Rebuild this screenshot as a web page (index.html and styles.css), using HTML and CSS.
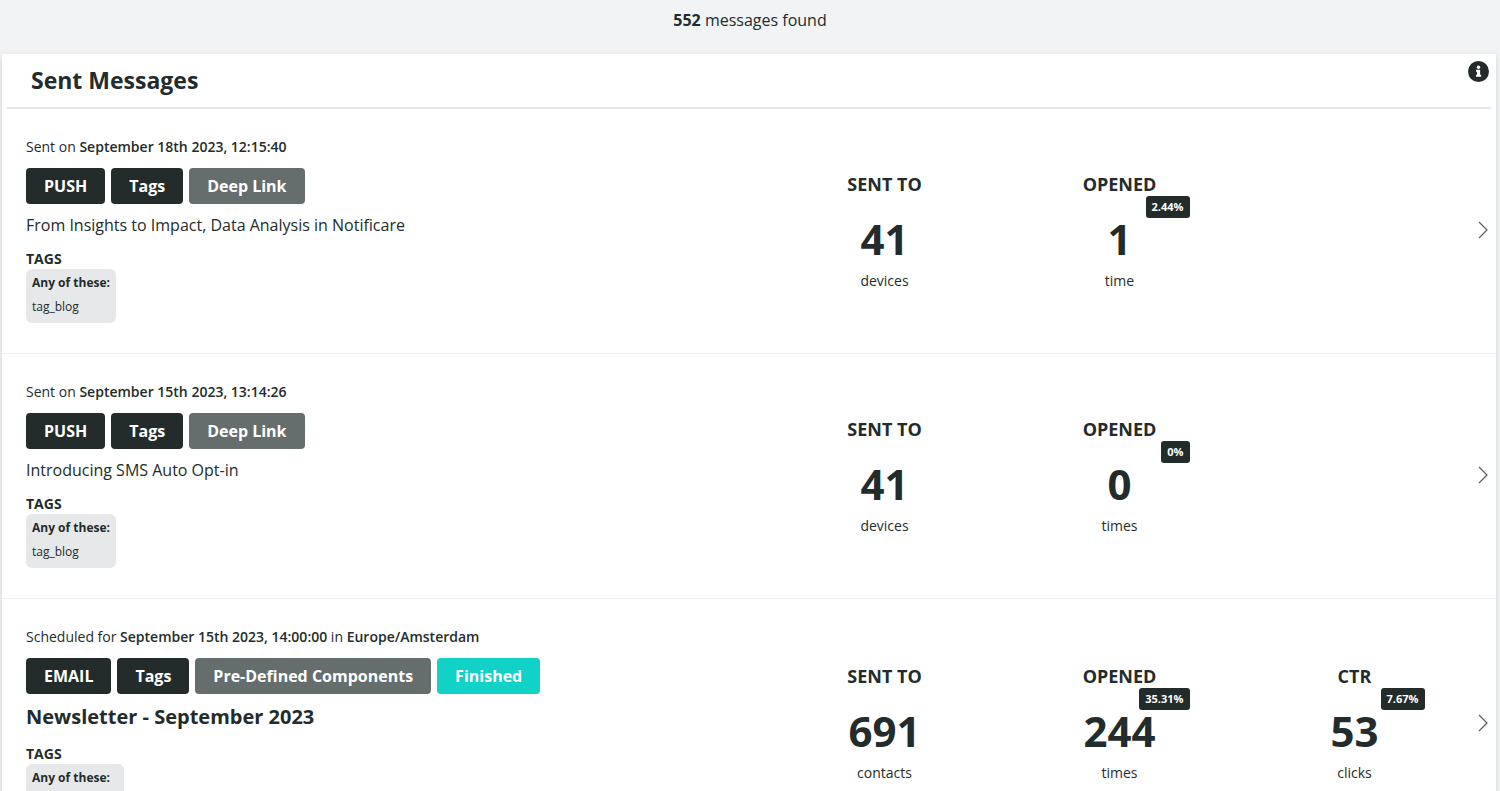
FILE: index.html
```html
<!DOCTYPE html>
<html lang="en">
<head>
<meta charset="utf-8">
<meta name="viewport" content="width=device-width, initial-scale=1">
<title>Sent Messages</title>
<link rel="stylesheet" href="styles.css">
</head>
<body>
<main class="page">
  <p class="summary"><strong>552</strong> messages found</p>
  <section class="card">
    <header class="card-header">
      <h1 class="card-title">Sent Messages</h1>
      <button class="info" type="button" aria-label="Information">
        <svg viewBox="0 0 512 512" width="21" height="21" aria-hidden="true"><circle cx="256" cy="256" r="256" fill="#232c2b"/><circle cx="256" cy="152" r="42" fill="#fff"/><path fill="#fff" d="M204 216h92v120h24v48H196v-48h24v-72h-24v-48z"/></svg>
      </button>
    </header>

    <article class="row">
      <div class="details">
        <p class="meta">Sent on <strong>September 18th 2023, 12:15:40</strong></p>
        <div class="labels"><span class="label">PUSH</span><span class="label">Tags</span><span class="label label-grey">Deep Link</span></div>
        <p class="message">From Insights to Impact, Data Analysis in Notificare</p>
        <h3 class="tags-title">TAGS</h3>
        <div class="tags"><strong>Any of these:</strong><span>tag_blog</span></div>
      </div>
      <div class="stat"><h3 class="stat-title">SENT TO</h3><p class="stat-value">41</p><p class="stat-unit">devices</p></div>
      <div class="stat"><h3 class="stat-title">OPENED</h3><span class="rate">2.44%</span><p class="stat-value">1</p><p class="stat-unit">time</p></div>
      <button class="open" type="button" aria-label="Open message"><svg viewBox="0 0 10 18" width="10" height="18" aria-hidden="true"><path d="M1 1l8 8-8 8" fill="none" stroke="#59605f" stroke-width="1.2"/></svg></button>
    </article>

    <article class="row">
      <div class="details">
        <p class="meta">Sent on <strong>September 15th 2023, 13:14:26</strong></p>
        <div class="labels"><span class="label">PUSH</span><span class="label">Tags</span><span class="label label-grey">Deep Link</span></div>
        <p class="message">Introducing SMS Auto Opt-in</p>
        <h3 class="tags-title">TAGS</h3>
        <div class="tags"><strong>Any of these:</strong><span>tag_blog</span></div>
      </div>
      <div class="stat"><h3 class="stat-title">SENT TO</h3><p class="stat-value">41</p><p class="stat-unit">devices</p></div>
      <div class="stat"><h3 class="stat-title">OPENED</h3><span class="rate">0%</span><p class="stat-value">0</p><p class="stat-unit">times</p></div>
      <button class="open" type="button" aria-label="Open message"><svg viewBox="0 0 10 18" width="10" height="18" aria-hidden="true"><path d="M1 1l8 8-8 8" fill="none" stroke="#59605f" stroke-width="1.2"/></svg></button>
    </article>

    <article class="row">
      <div class="details">
        <p class="meta">Scheduled for <strong>September 15th 2023, 14:00:00</strong> in <strong>Europe/Amsterdam</strong></p>
        <div class="labels"><span class="label">EMAIL</span><span class="label">Tags</span><span class="label label-grey">Pre-Defined Components</span><span class="label label-teal">Finished</span></div>
        <h2 class="subject">Newsletter - September 2023</h2>
        <h3 class="tags-title">TAGS</h3>
        <div class="tags tags-wide"><strong>Any of these:</strong></div>
      </div>
      <div class="stat"><h3 class="stat-title">SENT TO</h3><p class="stat-value">691</p><p class="stat-unit">contacts</p></div>
      <div class="stat"><h3 class="stat-title">OPENED</h3><span class="rate">35.31%</span><p class="stat-value">244</p><p class="stat-unit">times</p></div>
      <div class="stat"><h3 class="stat-title">CTR</h3><span class="rate">7.67%</span><p class="stat-value">53</p><p class="stat-unit">clicks</p></div>
      <button class="open" type="button" aria-label="Open message"><svg viewBox="0 0 10 18" width="10" height="18" aria-hidden="true"><path d="M1 1l8 8-8 8" fill="none" stroke="#59605f" stroke-width="1.2"/></svg></button>
    </article>
  </section>
</main>
</body>
</html>
```

FILE: styles.css
```css
* {
  box-sizing: border-box;
  margin: 0;
  padding: 0;
}

body {
  background: #f2f3f5;
  color: #232c2b;
  font-family: "Open Sans", "Noto Sans", sans-serif;
  font-size: 16px;
}

button {
  border: 0;
  background: none;
  cursor: pointer;
}

.page {
  height: 100vh;
  overflow: hidden;
}

.summary {
  padding: 8px 0 22px;
  line-height: 24px;
  text-align: center;
}

.card {
  margin: 0 4px 0 2px;
  background: #fff;
  box-shadow: 0 2px 6px rgba(0, 0, 0, 0.14);
}

.card-header {
  display: flex;
  justify-content: space-between;
  align-items: flex-start;
  margin: 0 5px;
  padding: 7px 2px 7px 24px;
  border-bottom: 2px solid #e6e8e9;
}

.card-title {
  padding: 3px 0 4px;
  font-size: 23px;
  line-height: 32px;
}

.info,
.open {
  display: flex;
}

.row {
  display: grid;
  grid-template-columns: 741fr repeat(3, 235fr) 24px;
  align-items: center;
  padding: 28px 0 30px 24px;
  border-bottom: 1px solid #eff0f1;
}

.meta {
  margin-bottom: 11px;
  font-size: 14px;
  line-height: 20px;
}

.meta strong {
  font-weight: 600;
}

.labels {
  display: flex;
  flex-wrap: wrap;
  gap: 6px;
  margin-bottom: 9px;
}

.label {
  padding: 0 18px;
  border-radius: 4px;
  background: #232c2b;
  color: #fff;
  font-weight: 700;
  line-height: 36px;
}

.label-grey {
  background: #656e6c;
}

.label-teal {
  background: #10d2c6;
}

.message {
  margin-bottom: 12px;
  line-height: 24px;
}

.subject {
  margin-bottom: 13px;
  font-size: 20px;
  line-height: 28px;
}

.tags-title {
  font-size: 14px;
  line-height: 20px;
}

.tags {
  display: flex;
  flex-direction: column;
  width: fit-content;
  min-height: 54px;
  padding: 2px 6px 4px;
  border-radius: 6px;
  background: #e7e8ea;
  font-size: 12px;
  line-height: 24px;
}

.tags-wide {
  min-width: 98px;
}

.stat {
  position: relative;
  justify-self: center;
  width: 140px;
  text-align: center;
}

.stat-title {
  padding-top: 2px;
  font-size: 18px;
  line-height: 24px;
}

.rate {
  position: absolute;
  top: 26px;
  right: 0;
  padding: 0 6px;
  border-radius: 3px;
  background: #232c2b;
  color: #fff;
  font-size: 11px;
  font-weight: 700;
  line-height: 22px;
}

.stat-value {
  padding: 15px 0 4px;
  font-size: 42px;
  font-weight: 700;
  line-height: 56px;
}

.stat-unit {
  font-size: 14px;
  line-height: 20px;
}

.open {
  grid-column: 5;
  padding: 8px 6px;
}
```
